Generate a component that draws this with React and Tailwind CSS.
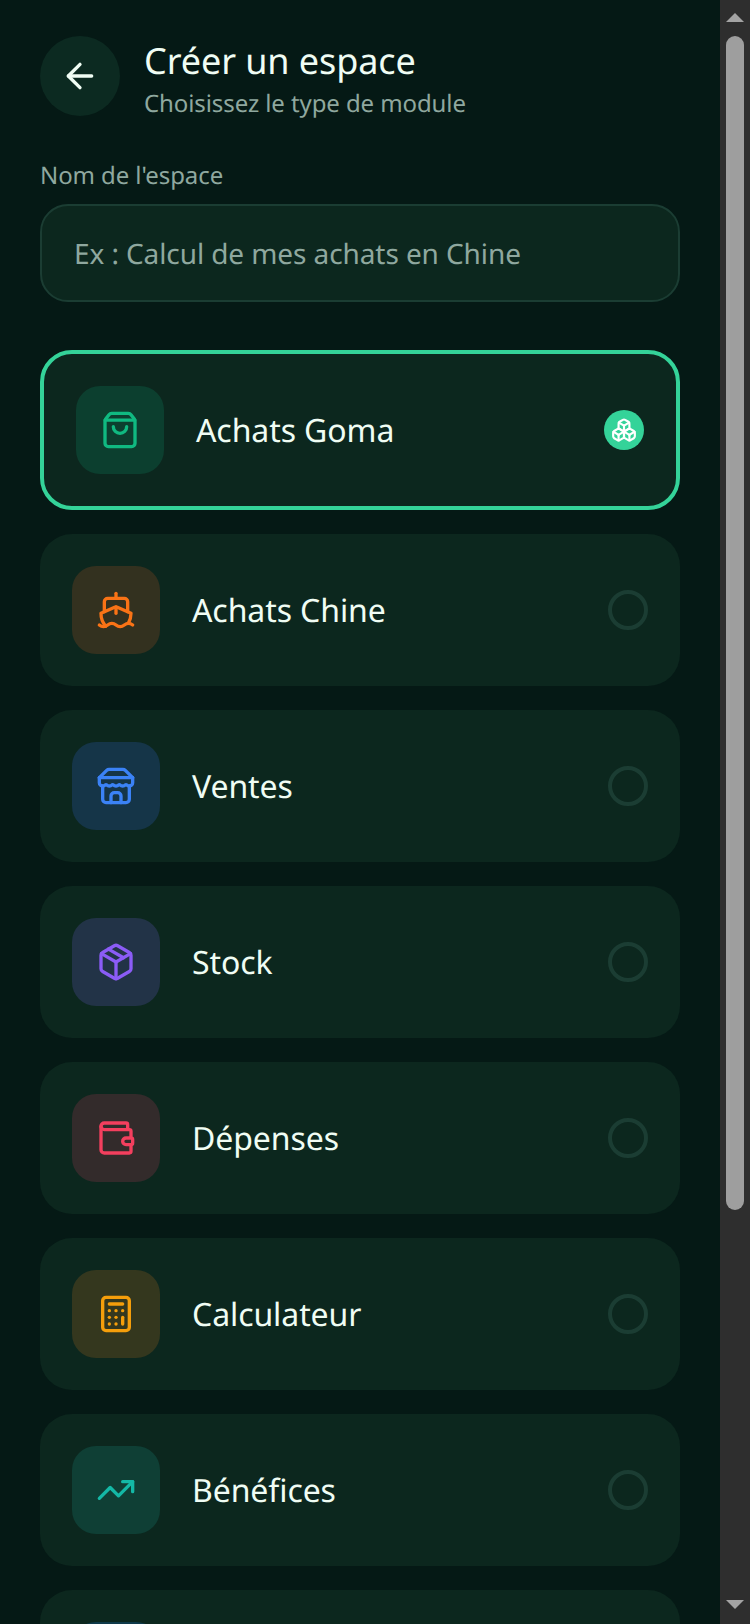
import React from 'react';
import { ArrowLeft, ShoppingBag, Ship, Package, Wallet, Calculator, TrendingUp, Boxes } from 'lucide-react';

const Store = ({ size }) => (
    <svg width={size} height={size} viewBox="0 0 24 24" fill="none" stroke="currentColor" strokeWidth="2" strokeLinecap="round" strokeLinejoin="round">
        <path d="m2 7 4.41-4.41A2 2 0 0 1 7.83 2h8.34a2 2 0 0 1 1.42.59L22 7" />
        <path d="M4 12v8a2 2 0 0 0 2 2h12a2 2 0 0 0 2-2v-8" />
        <path d="M15 22v-4a2 2 0 0 0-2-2h-2a2 2 0 0 0-2 2v4" />
        <path d="M2 7h20" />
        <path d="M22 7v3a2 2 0 0 1-2 2a2.7 2.7 0 0 1-1.59-.63.7.7 0 0 0-.82 0A2.7 2.7 0 0 1 16 12a2.7 2.7 0 0 1-1.59-.63.7.7 0 0 0-.82 0A2.7 2.7 0 0 1 12 12a2.7 2.7 0 0 1-1.59-.63.7.7 0 0 0-.82 0A2.7 2.7 0 0 1 8 12a2.7 2.7 0 0 1-1.59-.63.7.7 0 0 0-.82 0A2.7 2.7 0 0 1 4 12a2 2 0 0 1-2-2V7" />
    </svg>
);

const modules = [
    { name: 'Achats Chine', Icon: Ship, box: 'bg-[#33311f]', color: 'text-[#f97316]' },
    { name: 'Ventes', Icon: Store, box: 'bg-[#153548]', color: 'text-[#3b82f6]' },
    { name: 'Stock', Icon: Package, box: 'bg-[#223347]', color: 'text-[#8b5cf6]' },
    { name: 'Dépenses', Icon: Wallet, box: 'bg-[#332b2b]', color: 'text-[#f43f5e]' },
    { name: 'Calculateur', Icon: Calculator, box: 'bg-[#34371e]', color: 'text-[#f59e0b]' },
    { name: 'Bénéfices', Icon: TrendingUp, box: 'bg-[#0f3f35]', color: 'text-[#14b8a6]' },
];

const Scrollbar = () => (
    <div className="w-[30px] shrink-0 h-full bg-[#2e2e2e] flex flex-col items-center">
        <svg width="18" height="9" viewBox="0 0 18 9" className="mt-[13px] shrink-0">
            <polygon points="9,0 18,9 0,9" fill="#a3a3a3" />
        </svg>
        <div className="w-[18px] h-[1174px] mt-[14px] rounded-[9px] bg-[#9e9e9e] shrink-0"></div>
        <svg width="18" height="9" viewBox="0 0 18 9" className="mt-[390px] shrink-0">
            <polygon points="0,0 18,0 9,9" fill="#a3a3a3" />
        </svg>
    </div>
);

const App = () => {
    return (
        <div className="flex w-[750px] h-[1624px] overflow-hidden bg-[#051915] font-['Noto_Sans',sans-serif] tracking-[-0.09px] [text-rendering:geometricPrecision]">
            <div className="flex-1 min-w-0 px-10 pt-9">
                <div className="flex gap-6">
                    <button className="w-20 h-20 rounded-full bg-[#0c2a21] flex items-center justify-center text-[#f0fdf4] shrink-0">
                        <ArrowLeft size={40} strokeWidth={2} />
                    </button>
                    <div>
                        <h1 className="text-[36px] leading-[44px] text-[#f0fdf4] mt-[3px]">Créer un espace</h1>
                        <p className="text-[24px] leading-[26px] text-[#8fa89f] mt-[8px] -mb-px">Choisissez le type de module</p>
                    </div>
                </div>

                <label className="block text-[24px] leading-[32px] text-[#8fa89f] mt-[44px]">Nom de l'espace</label>
                <input
                    className="block w-full h-[98px] mt-[12px] px-8 pt-[2px] rounded-[28px] bg-[#0c271e] border-2 border-[#1b3d33] text-[28px] text-[#f0fdf4] outline-none placeholder:text-[#8fa89f] [text-rendering:geometricPrecision]"
                    placeholder="Ex : Calcul de mes achats en Chine"
                />

                <div className="flex flex-col gap-6 mt-12">
                    <div className="flex items-center gap-8 p-8 rounded-[32px] bg-[#0c271e] border-4 border-[#34d399]">
                        <div className="w-[88px] h-[88px] rounded-[24px] bg-[#0c3f2f] flex items-center justify-center text-[#10b981] shrink-0">
                            <ShoppingBag size={40} strokeWidth={2} />
                        </div>
                        <span className="flex-1 pt-[2px] text-[32px] text-[#f0fdf4]">Achats Goma</span>
                        <div className="w-10 h-10 rounded-full bg-[#34d399] flex items-center justify-center text-white">
                            <Boxes size={26} strokeWidth={2} />
                        </div>
                    </div>

                    {modules.map(({ name, Icon, box, color }) => (
                        <div key={name} className="flex items-center gap-8 p-8 rounded-[32px] bg-[#0c271e]">
                            <div className={`w-[88px] h-[88px] rounded-[24px] flex items-center justify-center shrink-0 ${box} ${color}`}>
                                <Icon size={40} strokeWidth={2} />
                            </div>
                            <span className="flex-1 pt-[2px] text-[32px] text-[#f0fdf4]">{name}</span>
                            <div className="w-10 h-10 rounded-full border-4 border-[#1b3d33]"></div>
                        </div>
                    ))}

                    {/* la carte suivante est coupée par le bas de l'écran */}
                    <div className="flex items-center p-8 rounded-[32px] bg-[#0c271e]">
                        <div className="w-[88px] h-[88px] rounded-[24px] bg-[#0f3a4a] shrink-0"></div>
                    </div>
                </div>
            </div>
            <Scrollbar />
        </div>
    );
};

export default App;
